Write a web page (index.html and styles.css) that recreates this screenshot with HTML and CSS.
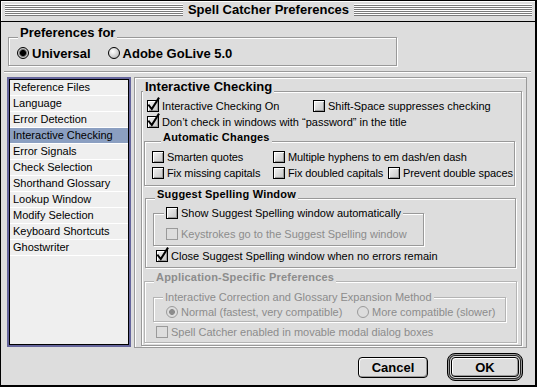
FILE: index.html
```html
<!DOCTYPE html>
<html lang="en">

<head>
    <meta charset="UTF-8">
    <meta name="viewport" content="width=device-width, initial-scale=1.0">
    <title>Spell Catcher Preferences</title>
    <link rel="stylesheet" href="styles.css">
</head>

<body>
    <div class="window">
        <div class="titlebar">
            <span class="stripes"></span>
            <span class="title">Spell Catcher Preferences</span>
            <span class="stripes"></span>
        </div>

        <div class="group prefs-for">
            <div class="group-title big">Preferences for</div>
            <div class="radio-row">
                <label class="opt bold"><span class="radio on"></span>Universal</label>
                <label class="opt bold"><span class="radio"></span>Adobe GoLive 5.0</label>
            </div>
        </div>

        <div class="separator"></div>

        <div class="main">
            <ul class="list">
                <li>Reference Files</li>
                <li>Language</li>
                <li>Error Detection</li>
                <li class="selected">Interactive Checking</li>
                <li>Error Signals</li>
                <li>Check Selection</li>
                <li>Shorthand Glossary</li>
                <li>Lookup Window</li>
                <li>Modify Selection</li>
                <li>Keyboard Shortcuts</li>
                <li>Ghostwriter</li>
            </ul>

            <div class="pane">
                <div class="group ic-group">
                    <div class="group-title big">Interactive Checking</div>

                    <div class="row first-row">
                        <label class="opt ic-on"><span class="cb on"><svg viewBox="0 0 10 10"><path d="M1 4.5 L3.8 8 L10.5 -2.5" /></svg></span>Interactive Checking On</label>
                        <label class="opt"><span class="cb"></span>Shift-Space suppresses checking</label>
                    </div>
                    <div class="row">
                        <label class="opt"><span class="cb on"><svg viewBox="0 0 10 10"><path d="M1 4.5 L3.8 8 L10.5 -2.5" /></svg></span>Don’t check in windows with “password” in the title</label>
                    </div>

                    <!-- automatic changes -->
                    <div class="group sub auto-box">
                        <div class="group-title small">Automatic Changes</div>
                        <div class="auto-grid">
                            <label class="opt"><span class="cb"></span>Smarten quotes</label>
                            <label class="opt span2"><span class="cb"></span>Multiple hyphens to em dash/en dash</label>
                            <label class="opt"><span class="cb"></span>Fix missing capitals</label>
                            <label class="opt"><span class="cb"></span>Fix doubled capitals</label>
                            <label class="opt"><span class="cb"></span>Prevent double spaces</label>
                        </div>
                    </div>

                    <!-- suggest spelling window -->
                    <div class="group sub suggest-box">
                        <div class="group-title small">Suggest Spelling Window</div>
                        <div class="group nested show-box">
                            <label class="opt nested-title"><span class="cb"></span>Show Suggest Spelling window automatically</label>
                            <label class="opt disabled keys-row"><span class="cb off"></span>Keystrokes go to the Suggest Spelling window</label>
                        </div>
                        <label class="opt close-row"><span class="cb on"><svg viewBox="0 0 10 10"><path d="M1 4.5 L3.8 8 L10.5 -2.5" /></svg></span>Close Suggest Spelling window when no errors remain</label>
                    </div>

                    <!-- application specific, disabled -->
                    <div class="group sub app-box dim">
                        <div class="group-title small disabled">Application-Specific Preferences</div>
                        <div class="group nested method-box dim">
                            <div class="nested-title disabled">Interactive Correction and Glossary Expansion Method</div>
                            <div class="row method-row">
                                <label class="opt disabled normal-opt"><span class="radio off on"></span>Normal (fastest, very compatible)</label>
                                <label class="opt disabled"><span class="radio off"></span>More compatible (slower)</label>
                            </div>
                        </div>
                        <label class="opt disabled modal-row"><span class="cb off"></span>Spell Catcher enabled in movable modal dialog boxes</label>
                    </div>
                </div>
            </div>
        </div>

        <div class="buttons">
            <button class="btn cancel">Cancel</button>
            <div class="default-ring">
                <button class="btn ok">OK</button>
            </div>
        </div>
    </div>
</body>

</html>
```

FILE: styles.css
```css
* {
    box-sizing: border-box;
}

body {
    margin: 0;
    font-family: "Liberation Sans", Arial, sans-serif;
    font-size: 11px;
    color: #000;
    background: #fff;
}

/* prozor */
.window {
    width: 537px;
    height: 387px;
    border: 1px solid #000;
    border-right-width: 2px;
    border-bottom-width: 2px;
    background: #ddd;
    display: flex;
    flex-direction: column;
}

.titlebar {
    height: 21px;
    flex: none;
    display: flex;
    align-items: flex-start;
    padding: 3px 3px 0 4px;
    border-bottom: 1px solid #000;
    box-shadow: inset 1px 1px 0 #fff;
}

.stripes {
    flex: 1;
    height: 12px;
    background: repeating-linear-gradient(to bottom, #fff 0 1px, #7a7a7a 1px 2px);
}

.title {
    padding: 0 5px;
    margin-top: -1px;
    font-size: 13px;
    font-weight: bold;
    line-height: 14px;
}

/* grupe */
.group {
    border: 1px solid #999;
    box-shadow: 1px 1px 0 #fff, inset 1px 1px 0 #fff;
}

.group.dim {
    border-color: #b4b4b4;
}

.group-title {
    width: fit-content;
    background: #ddd;
    padding: 0 2px;
    font-weight: bold;
}

.group-title.big {
    font-size: 13px;
    line-height: 14px;
    margin: -12px 0 0 1px;
}

.group-title.small {
    font-size: 11px;
    line-height: 13px;
    margin: -11px 0 0 9px;
    letter-spacing: 0.2px;
}

.disabled {
    color: #8c8c8c;
}

.prefs-for {
    flex: none;
    width: 389px;
    margin: 15px 0 0 7px;
    padding: 0 0 4px 8px;
}

.radio-row {
    display: flex;
    margin-top: 5px;
    height: 16px;
    gap: 17px;
}

.bold {
    font-size: 13px;
    font-weight: bold;
}

.separator {
    flex: none;
    margin: 5px 4px 0 3px;
    border-top: 1px solid #999;
    border-bottom: 1px solid #fff;
}

.main {
    flex: none;
    display: flex;
    margin-top: 4px;
}

/* lista */
.list {
    list-style: none;
    margin: 2px 0 0 8px;
    padding: 0;
    width: 120px;
    height: 266px;
    border: 1px solid #000;
    outline: 2px solid #65659c;
    background: #efefef;
}

.list li {
    height: 16px;
    line-height: 15px;
    padding-left: 3px;
    border-bottom: 1px solid #fff;
}

.list li.selected {
    background: #8b9fc1;
}

.pane {
    margin-left: 5px;
    width: 393px;
    height: 271px;
    border: 1px solid #999;
    box-shadow: inset 1px 1px 0 #fff;
}

.ic-group {
    margin: 13px 0 0 6px;
    width: 381px;
    padding-bottom: 2px;
}

/* kontrole */
.opt {
    display: flex;
    align-items: center;
    gap: 3px;
    height: 16px;
    white-space: nowrap;
}

.cb {
    flex: none;
    width: 12px;
    height: 12px;
    border: 1px solid #000;
    background: linear-gradient(135deg, #f2f2f2, #c4c4c4);
    box-shadow: inset 1px 1px 0 #fff, inset -1px -1px 0 #999;
}

.cb.off {
    border-color: #9a9a9a;
    background: #ddd;
    box-shadow: none;
}

.cb svg {
    display: block;
    width: 10px;
    height: 10px;
    overflow: visible;
}

.cb path {
    fill: none;
    stroke: #000;
    stroke-width: 2;
    stroke-linecap: square;
    stroke-linejoin: miter;
}

.radio {
    flex: none;
    width: 12px;
    height: 12px;
    border-radius: 50%;
    border: 1px solid #000;
    background: radial-gradient(circle at 38% 35%, #fff 0, #e4e4e4 35%, #a9a9a9 100%);
}

.radio.on {
    background: radial-gradient(circle, #000 0 2.6px, #555 3.2px, #c8c8c8 4.4px);
}

.radio.off {
    border-color: #9a9a9a;
    background: #ddd;
}

.radio.off.on {
    background: radial-gradient(circle, #8c8c8c 0 2.6px, #ddd 3.2px);
}

.row {
    display: flex;
    margin-left: 5px;
}

.first-row {
    margin-top: 4px;
}

.ic-on {
    width: 166px;
}

.sub {
    width: 371px;
    margin-left: 2px;
}

.auto-box {
    margin-top: 11px;
    padding: 0 0 4px 7px;
}

.auto-grid {
    display: grid;
    grid-template-columns: 121px 115px auto;
    margin-top: 5px;
    letter-spacing: -0.1px;
}

.span2 {
    grid-column: span 2;
}

.suggest-box {
    margin: 12px 0 0 3px;
    padding-bottom: 3px;
}

.nested {
    margin: 12px 0 0 7px;
}

.nested-title {
    width: fit-content;
    height: 14px;
    line-height: 14px;
    background: #ddd;
    padding: 0 2px;
}

.show-box {
    width: 271px;
    padding-bottom: 3px;
}

.show-box .nested-title {
    margin: -8px 0 0 10px;
}

.keys-row {
    margin: 6px 0 0 12px;
}

.close-row {
    margin: 2px 0 0 10px;
}

.app-box {
    width: 373px;
    margin-top: 13px;
    padding-bottom: 2px;
}

.method-box {
    width: 353px;
    margin-top: 13px;
    margin-left: 8px;
    padding-bottom: 1px;
}

.method-box .nested-title {
    margin: -8px 0 0 9px;
}

.method-row {
    margin-left: 12px;
    gap: 4px;
}

.normal-opt {
    width: 187px;
}

.modal-row {
    margin: 2px 0 0 11px;
}

/* dugmad */
.buttons {
    flex: none;
    display: flex;
    justify-content: flex-end;
    align-items: center;
    gap: 19px;
    margin-top: 5px;
    padding-right: 12px;
}

.btn {
    font-family: "Liberation Sans", Arial, sans-serif;
    font-size: 13px;
    font-weight: bold;
    color: #000;
    padding: 0;
    border: 1px solid #000;
    border-radius: 4px;
    background: #ddd;
    box-shadow: inset 1px 1px 0 #fff, inset -1px -1px 0 #999;
}

.cancel {
    width: 70px;
    height: 21px;
}

.default-ring {
    border: 1px solid #000;
    border-radius: 8px;
    padding: 3px;
    box-shadow: inset 0 0 0 1px #999, inset 0 0 0 2px #222;
}

.ok {
    display: block;
    width: 68px;
    height: 20px;
}
```
